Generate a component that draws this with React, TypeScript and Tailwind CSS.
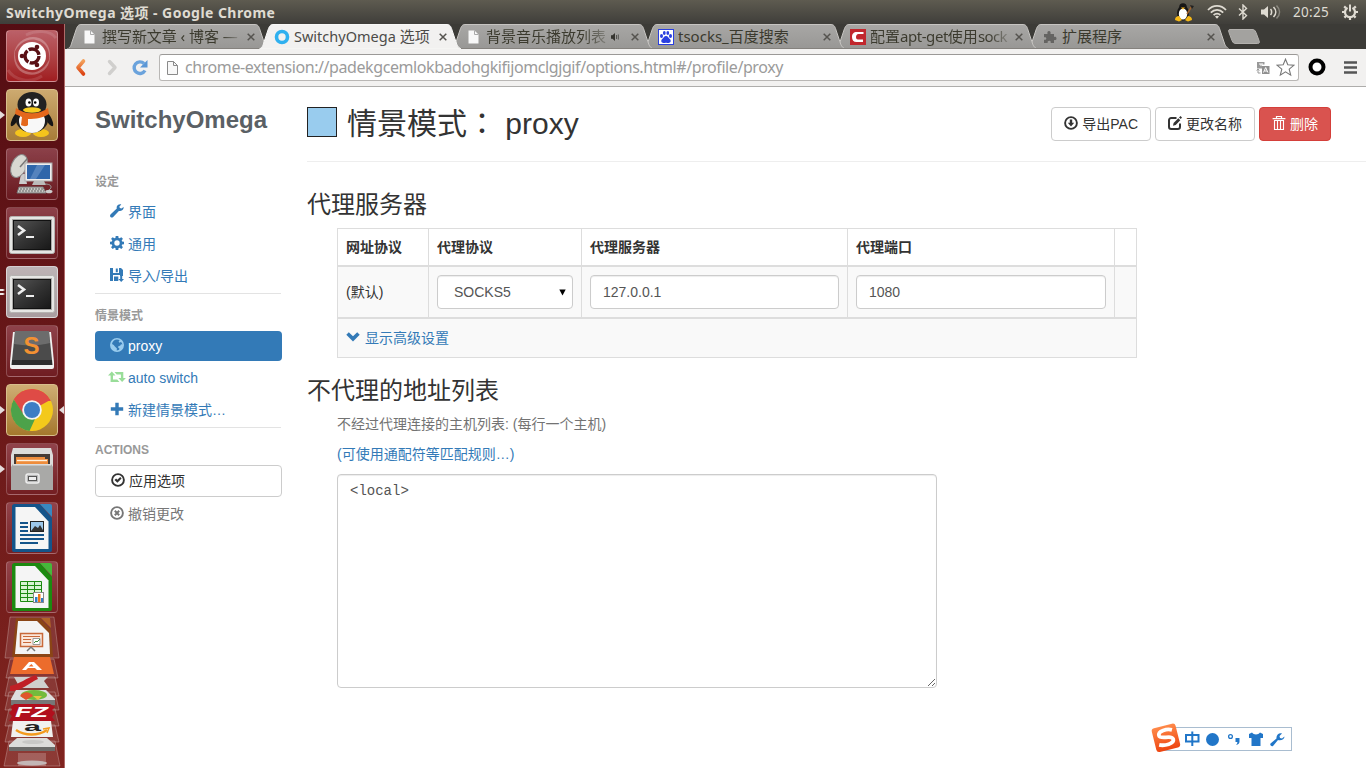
import React from "react";

type Kids = { children?: React.ReactNode };

/* ---------- small page icons, 14x14 grid ---------- */
const G = ({ children, className = "", w = 14 }: Kids & { className?: string; w?: number }) => (
  <svg width={w} height="14" viewBox={`0 0 ${w} 14`} className={`mb-[2px] shrink-0 ${className}`} fill="currentColor">
    {children}
  </svg>
);
const Wrench = ({ className = "" }) => (
  <G className={className}>
    <path d="M13.6 2.9 11.5 4.6 9.8 4.1 9.4 2.4 11.3.4C9.6-.2 7.6.5 6.9 2.3c-.3.8-.3 1.6-.1 2.3L.7 10.3c-.8.8-.9 1.9-.2 2.7.8.8 1.900.7 2.700-.1L8.900 6.900c1 .3 2.200.2 3.200-.6 1.200-.8 1.700-2.100 1.500-3.400z" />
  </G>
);
const Cog = () => (
  <G>
    <path
      fillRule="evenodd"
      d="M5.700 0h2.600l.3 1.900 1 .4L11.300 1.200l1.600 1.600-1.200 1.700.4 1 1.900.3v2.500l-1.900.3-.4 1 1.200 1.700-1.600 1.600-1.700-1.200-1 .4-.3 1.900H5.700l-.3-1.900-1-.4-1.700 1.200-1.600-1.600 1.200-1.700-.4-1L0 8.300V5.800l1.900-.3.4-1L1.100 2.800l1.600-1.600 1.700 1.100 1-.4zM7 4.300a2.700 2.700 0 1 0 0 5.400 2.700 2.700 0 0 0 0-5.400z"
    />
  </G>
);
const FloppySave = () => (
  <G>
    <path d="M0 0h3v5h6V0h2L13 2v6h-3V7H3v6H0zM5.800.6h2v3.600h-2z" />
    <path d="M4 8.400h4.300V13H4zM10.200 7.500h2v3.400H14l-2.800 3-2.800-3h1.800z" />
  </G>
);
const Globe = () => (
  <G className="text-[#99ccee]">
    <path
      fillRule="evenodd"
      d="M7 0a7 7 0 1 0 0 14A7 7 0 0 0 7 0zM7 1.500c1 0 1.900.2 2.700.6L8.600 3.600l.9 1.200 1.400-.7 1 .8.500 1.600-1.400-.3-.9 1.500-1.600.4-.4 1.500 1.300.9-.3 1.300A5.500 5.500 0 0 1 6.700 12.500L6.900 10.400 4.900 8.600 3.700 7 2 6C2.400 3.400 4.500 1.500 7 1.500z"
    />
  </G>
);
const Retweet = () => (
  <G w={18} className="text-[#99dd99]">
    <path d="M3.800 1.500 7.500 5.500H5V9.500h4.200l2.200 2.500H2.600V5.500H0zM6.500 2h8.800v6h2.600l-3.800 4-3.700-4h2.500V4.500H8.700z" />
  </G>
);
const Plus = () => (
  <G>
    <path d="M5.300.8h3.400v4.500h4.500v3.400H8.700v4.500H5.300V8.700H.8V5.300h4.500z" />
  </G>
);
const OkCircle = () => (
  <G>
    <circle cx="7" cy="7" r="5.900" fill="none" stroke="currentColor" strokeWidth="1.900" />
    <path d="m3.500 7 1.600-1.500 1.300 1.300 2.800-2.900 1.400 1.500-4.200 4.300z" />
  </G>
);
const RemoveCircle = () => (
  <G>
    <circle cx="7" cy="7" r="5.900" fill="none" stroke="currentColor" strokeWidth="1.900" />
    <path d="m4.800 4.800 4.400 4.400M9.200 4.800 4.800 9.200" stroke="currentColor" strokeWidth="2" />
  </G>
);
const Download = () => (
  <G>
    <circle cx="7" cy="7" r="5.900" fill="none" stroke="currentColor" strokeWidth="1.900" />
    <path d="M5.800 3.400h2.400v3.400h2L7 10.600 3.800 6.800h2z" />
  </G>
);
const Edit = () => (
  <G>
    <path
      d="M8.500 2H3.200A2.200 2.200 0 0 0 1 4.200v6.600A2.200 2.200 0 0 0 3.200 13h6.600A2.200 2.200 0 0 0 12 10.800V7.500"
      fill="none"
      stroke="currentColor"
      strokeWidth="2"
    />
    <path d="M5 9.700 5.600 6.900 10.300 2.200l2 2L7.700 8.900zM11 1.500 12.500.100 14 1.600 12.800 3z" />
  </G>
);
const Trash = () => (
  <G>
    <path d="M4.500 2.500v-2h5v2M.6 2.700h12.800" fill="none" stroke="currentColor" strokeWidth="1.200" />
    <path d="M2.500 4.500v9h9v-9zM5.500 5v8M8.500 5v8" fill="none" stroke="currentColor" strokeWidth="1.100" />
  </G>
);
const Chevron = () => (
  <G>
    <path d="M.3 4.800 2.800 2.300 7 6.200l4.200-3.900 2.500 2.500L7 11.500z" />
  </G>
);

/* ---------- launcher ---------- */
const Tile = ({ children, tone = "from-[#a05560]/70 to-[#7a2530]/40 border-white/20" }: Kids & { tone?: string }) => (
  <div className={`h-[52px] w-[52px] shrink-0 rounded-[4px] border bg-gradient-to-b ${tone}`}>
    <svg width="52" height="52" viewBox="0 0 52 52" className="-m-px block">
      {children}
    </svg>
  </div>
);
const Arrow = ({ children, left, right, dbl }: Kids & { left?: boolean; right?: boolean; dbl?: boolean }) => (
  <div className="flex w-[64px] items-center">
    <svg width="6" height="12" viewBox="0 0 6 12" className="shrink-0">
      {left && <path d="M0 2 5 6 0 10z" fill="#e4dcdc" />}
      {dbl && <path d="M0 3h3l2 1-2 1H0zM0 7h3l2 1-2 1H0z" fill="#f0eaea" />}
    </svg>
    {children}
    <svg width="6" height="12" viewBox="0 0 6 12" className="shrink-0">
      {right && <path d="M6 2 1 6l5 4z" fill="#e4dcdc" />}
    </svg>
  </div>
);
const Terminal = () => (
  <>
    <defs>
      <linearGradient id="term" x1="0" y1="0" x2="1" y2="1">
        <stop offset="0" stopColor="#555" />
        <stop offset=".5" stopColor="#333" />
        <stop offset="1" stopColor="#181818" />
      </linearGradient>
    </defs>
    <rect x="3.500" y="9.500" width="45" height="37" rx="2" fill="#e6e6e4" stroke="#b5b3b1" />
    <rect x="6" y="12" width="40" height="32" fill="#aaa9a7" />
    <rect x="7.500" y="13.500" width="37" height="29" fill="url(#term)" stroke="#111" />
    <path d="m12 19 6 4.500-6 4.500" fill="none" stroke="#eee" strokeWidth="2.600" />
    <path d="M20 30h8" stroke="#eee" strokeWidth="2" />
  </>
);
const Doc = ({ edge, corner, children }: Kids & { edge: string; corner: string }) => (
  <>
    <path d="M8.500 2H34l12 14v32a2 2 0 0 1-2 2H8a2 2 0 0 1-2-2V4.500A2.500 2.500 0 0 1 8.500 2z" fill={edge} />
    <path d="M34 2h10a2 2 0 0 1 2 2v11z" fill={corner} />
    <path d="M9.500 5H29l13.500 14.500V47h-33z" fill="#f5f5f5" />
    {children}
  </>
);

const Launcher = () => (
  <div className="flex h-[744px] w-[65px] shrink-0 flex-col overflow-hidden border-r border-[#b06a68] bg-gradient-to-b from-[#550d13] to-[#80241f]">
    <div className="flex flex-col gap-[7px] pt-[6px]">
      <Arrow>
        <Tile tone="from-[#bb6068] to-[#a01c20] border-white/30">
          <path d="M8 24C9 12 22 4 33 8c10 4 14 16 9 26 4-12-2-22-12-24-8-2-18 3-22 14zM44 28c-1 12-12 19-24 16C10 41 6 30 9 20c-1 12 4 20 14 22 8 2 16-3 21-14z" fill="#fff" opacity=".28" />
          <path d="M2 40C8 50 24 54 36 46M50 8C44 0 30 0 20 5" stroke="#fff" strokeOpacity=".12" strokeWidth="3" fill="none" />
          <circle cx="26" cy="26" r="14" fill="#fff" />
          <circle cx="26" cy="26" r="7" fill="none" stroke="#5a1015" strokeWidth="3.400" strokeDasharray="13.200 1.460" />
          <circle cx="16" cy="26" r="2.300" fill="#5a1015" />
          <circle cx="31" cy="17" r="2.300" fill="#5a1015" />
          <circle cx="31" cy="35" r="2.300" fill="#5a1015" />
        </Tile>
      </Arrow>
      <Arrow left>
        <Tile tone="from-[#cdaa70] to-[#a87d38] border-[#d8be8c]">
          <ellipse cx="17" cy="44" rx="8" ry="4" fill="#f5c51c" />
          <ellipse cx="35" cy="44" rx="8" ry="4" fill="#f5c51c" />
          <path d="M10 24c-4 5-6 11-5 13 2 1 5-3 6-5zM42 24c4 5 6 11 5 13-2 1-5-3-6-5z" fill="#161616" />
          <ellipse cx="26" cy="29" rx="16.500" ry="15" fill="#1c1c1c" />
          <ellipse cx="26" cy="32" rx="13" ry="12" fill="#f8f8f8" />
          <ellipse cx="26" cy="15.500" rx="14.500" ry="12.500" fill="#222" />
          <ellipse cx="22.500" cy="13.500" rx="3" ry="4" fill="#fff" />
          <ellipse cx="30" cy="13.500" rx="3" ry="4" fill="#fff" />
          <circle cx="23.400" cy="13.500" r="1.300" />
          <circle cx="29.200" cy="13.500" r="1.300" />
          <ellipse cx="26" cy="21" rx="9" ry="2.800" fill="#f7cd22" />
          <path d="M10 19c9 7 23 7 32 0l1 6c-6 4-13 5-21 5v6c-2 2-5 1-7 0l1-8-7-3z" fill="#e4681c" />
        </Tile>
      </Arrow>
      <Arrow>
        <Tile>
          <path d="m15 26-2 10h8l-2-10z" fill="#ccc" />
          <ellipse cx="13" cy="18" rx="7.500" ry="12" transform="rotate(24 13 18)" fill="#d8d8d2" stroke="#888" />
          <path d="m14 19 7-8" stroke="#777" strokeWidth="1.500" />
          <rect x="19" y="15" width="27" height="18" fill="#eee" stroke="#aaa" />
          <rect x="21" y="17" width="23" height="14" fill="#2f66aa" />
          <path d="M31 17h8l-9 14h-6z" fill="#6590c4" opacity=".7" />
          <path d="M28 33h10l2 4H26z" fill="#bbb" />
          <path d="M13 39h24l3 6H11z" fill="#c8c8c4" stroke="#777" />
          <path d="M14 41h23M13 43h25" stroke="#666" strokeDasharray="2 1" />
          <path d="M39 36c6 0 8 3 4 6" fill="none" stroke="#999" />
          <ellipse cx="43" cy="43.500" rx="3.500" ry="1.800" fill="#ccc" />
        </Tile>
      </Arrow>
      <Arrow>
        <Tile><Terminal /></Tile>
      </Arrow>
      <Arrow dbl>
        <Tile tone="from-[#bdb3b5] to-[#a99da0] border-white/50"><Terminal /></Tile>
      </Arrow>
      <Arrow>
        <Tile>
          <path d="M7 7h38l3 30v5a2 2 0 0 1-2 2H6a2 2 0 0 1-2-2v-5z" fill="#f0f0ef" />
          <path d="M6 35h40l.500 5h-41z" fill="#2c2c2c" />
          <path d="M9 6h34l3 29H6z" fill="#4b4b4b" />
          <path d="M9 6h34l1 12c-11 3-24 3-36 1z" fill="#888" opacity=".55" />
          <text x="17.500" y="29" fontSize="24" fontWeight="bold" fill="#f39132" fontFamily="Liberation Sans, sans-serif">S</text>
        </Tile>
      </Arrow>
      <Arrow left right>
        <Tile tone="from-[#cfae74] to-[#a5782c] border-[#d8be8c]">
          <circle cx="26" cy="26" r="21" fill="#f3c91b" />
          <path d="M26 26 7.800 15.500A21 21 0 0 1 44.200 16z" fill="#df4b46" />
          <path d="M26 17h18.900A21 21 0 0 0 7.800 15.500L17 31z" fill="#df4b46" />
          <path d="M7.800 15.500 18 31l11 4-5.500 12A21 21 0 0 1 7.800 15.500z" fill="#4ca24a" />
          <circle cx="26" cy="26" r="9.800" fill="#f4f4f4" />
          <circle cx="26" cy="26" r="8" fill="#3d7dc4" />
        </Tile>
      </Arrow>
      <Arrow left>
        <Tile>
          <path d="M7 5h38l2 7v20H5V12z" fill="#dcdcda" />
          <rect x="8" y="11" width="36" height="12" fill="#453b35" />
          <path d="M10 14h29v2h3v7H10z" fill="#ef8d3c" />
          <path d="M11 17.500h30" stroke="#fff2e0" strokeWidth="1.400" />
          <path d="M7 21h38l2 3v23H5V24z" fill="#a9a9a7" />
          <path d="M7 21h38v1.500H7z" fill="#ddd" />
          <rect x="20" y="31" width="13" height="9" rx="2" fill="#bbb" stroke="#eee" strokeWidth="1.500" />
          <rect x="22.500" y="33.500" width="8" height="4" fill="#eee" stroke="#555" />
        </Tile>
      </Arrow>
      <Arrow>
        <Tile>
          <Doc edge="#14548a" corner="#3888c0">
            <path d="M14 21h8M14 25h8M14 29h8M14 33h24M14 37h24M14 41h18" stroke="#14548a" strokeWidth="1.800" />
            <rect x="24.500" y="19.500" width="13" height="10" fill="#9cc7ea" stroke="#222" />
            <path d="m25 29 4-5 3 2 2-3 3.500 6z" fill="#333" />
          </Doc>
        </Tile>
      </Arrow>
      <Arrow>
        <Tile>
          <Doc edge="#1c8a10" corner="#45b83a">
            <rect x="14" y="20" width="22" height="21" fill="#d8f4d2" />
            <path d="M14.500 20.500h21v20h-21zM14 24.500h22M14 28.500h22M14 32.500h22M14 36.500h22M21.500 20v21M28.500 20v21" stroke="#1c8a10" fill="none" />
            <rect x="27.500" y="31.500" width="10" height="10" fill="#fff" stroke="#888" />
            <path d="M29 36h2.500v5H29zM35 37h2v4h-2z" fill="#2f7dc8" />
            <path d="M32 33h2.500v8H32z" fill="#f07818" />
          </Doc>
        </Tile>
      </Arrow>
    </div>
    <svg width="64" height="155" viewBox="0 0 64 155" className="block shrink-0">
      <g fill="#fff" fillOpacity=".1" stroke="#fff" strokeOpacity=".25">
        <path d="M10 4h44l5 41H5zM10 46h44l4 19H6zM9 64h46l4 19H5zM9 79h46l4 18H5zM9 96h46l4 17H5zM9 112h46l4 17H5zM9 128h46l5 25H4z" />
      </g>
      <path d="M16 5h24l11 12 2 27H12z" fill="#8a4516" />
      <path d="M18 8h19l12 12 1 21H15z" fill="#f4f4f4" />
      <path d="M41 5h9l1 10z" fill="#b06428" />
      <path d="M20.500 20.500h22v13h-22z" fill="#fbe8dc" stroke="#c8693a" strokeWidth="1.500" />
      <path d="M23 23.500h17M23 26.500h8M23 29.500h8" stroke="#c8693a" />
      <path d="M33 25.500h7v6h-7z" fill="#fff" stroke="#999" />
      <path d="m34 30 2-2 1 1 3-3" stroke="#3c8c3c" fill="none" />
      <path d="m27 38 4-4 4 4" stroke="#777" strokeWidth="1.500" fill="none" />
      <path d="M14 44h36l4 17H10z" fill="#ec6c2c" />
      <path d="M22 57 29 49h5l8 8h-5l-2-2h-7l-2 2zM28.500 53.500h5L31.500 51z" fillRule="evenodd" fill="#fff" />
      <path d="M14 64h34l-4 4 5 7H20z" fill="#cfcfcd" />
      <path d="M10 73c8-1 18-9 26-11l2 4c-9 4-18 13-28 12z" fill="#c01f26" />
      <path d="M16 77h30l9 9v5H11v-5z" fill="#dedede" />
      <path d="M11 87h44v5H11z" fill="#777" />
      <ellipse cx="34" cy="82" rx="13" ry="5" fill="#73bb3c" />
      <path d="M20 83c4-5 9-5 13 0l-7 4z" fill="#e0552c" />
      <path d="M33 83h9l-4 4z" fill="#e8c440" />
      <path d="m11 94 3-3h36l5 3-3 3 3 3-3 4 3 4H9l3-5-3-3 3-3z" fill="#b10f1d" />
      <text x="15" y="104" fontSize="14" fontWeight="bold" fontStyle="italic" fill="#fff" fontFamily="Liberation Sans, sans-serif" textLength="33" lengthAdjust="spacingAndGlyphs">FZ</text>
      <path d="M13 108h38l2 16H11z" fill="#f1f1ef" />
      <text x="24" y="118" fontSize="12" fontWeight="bold" fill="#222" fontFamily="Liberation Sans, sans-serif" textLength="17" lengthAdjust="spacingAndGlyphs">a</text>
      <path d="M16 117c9 6 22 6 31 0" fill="none" stroke="#f39a1d" strokeWidth="2.500" />
      <path d="m43 116 6-1-2 5" fill="none" stroke="#f39a1d" strokeWidth="1.500" />
      <path d="M17 125h30l8 7v3H9v-3z" fill="#dcdcda" />
      <path d="M9 134h46v4H9z" fill="#6b6b69" />
      <ellipse cx="33" cy="129" rx="11" ry="2" fill="#c8c8c6" />
      <path d="M18 140h28v13H18z" fill="#fff" opacity=".2" />
      <ellipse cx="32" cy="150" rx="15" ry="2.500" fill="#ccc" opacity=".8" />
    </svg>
  </div>
);

/* ---------- browser ---------- */
const File = ({ line = "none", cls = "" }) => (
  <svg width="16" height="16" viewBox="0 0 16 16" className={`shrink-0 ${cls}`}>
    <path d="M2.500 1.500h6l4 4v9h-10z" fill="#f8f8f8" stroke={line} />
    <path d="M8.500 1.500v4h4" fill="none" stroke={line === "none" ? "#aaa" : line} />
  </svg>
);
const Close = () => (
  <svg width="8" height="8" viewBox="0 0 8 8" className="shrink-0">
    <path d="m.700.700 6.600 6.600M7.300.700.700 7.300" stroke="#55534f" strokeWidth="1.500" />
  </svg>
);
const Tab = ({ icon, children, active, z, audio }: Kids & { icon: React.ReactNode; active?: boolean; z: string; audio?: boolean }) => (
  <div className={`relative -mr-[10px] h-[25px] w-[202px] shrink-0 ${z}`}>
    <svg width="202" height="25" viewBox="0 0 202 25" className="absolute inset-0">
      <defs>
        <linearGradient id="tabg" x1="0" y1="0" x2="0" y2="1">
          <stop offset="0" stopColor="#a8a7a5" />
          <stop offset="1" stopColor="#989795" />
        </linearGradient>
      </defs>
      <path
        d="M.5 25C4 23 4 21 5 18L9 6c1.300-4 2.500-5.500 5-5.500h174c2.500 0 4 1.500 5 5.500l4 12c1 3 1.500 5 5 7z"
        fill={active ? "#f2f1f0" : "url(#tabg)"}
        stroke={active ? "#f8f8f7" : "#c6c4c1"}
        strokeWidth="1"
      />
      {!active && <path d="M0 24.500h202" stroke="#85827e" />}
    </svg>
    <div className="relative flex h-full items-center pl-[15px]">
      {icon}
      <div
        className={`-mt-px ml-1 overflow-hidden whitespace-nowrap text-[15px] leading-[24px] ${audio ? "w-[122px]" : "w-[141px]"} ${active ? "text-[#4c4b48]" : "text-[#3b3a2e]"}`}
      >
        {children}
      </div>
      {audio && (
        <svg width="12" height="12" viewBox="0 0 12 12" className="-ml-px mr-[8px] shrink-0">
          <path d="M4 4.200h1.500L8 2v8L5.500 7.800H4z" fill="#35342f" />
          <path d="M9.500 4v4M11.300 3.500v5" stroke="#35342f" strokeOpacity=".7" />
        </svg>
      )}
      <div className="ml-[4px]"><Close /></div>
    </div>
  </div>
);

const TitleBar = () => (
  <div className="flex h-[24px] items-center bg-gradient-to-b from-[#5e5b50] to-[#3f3e3a] text-[#dfdbd2]">
    <div className="flex-1 whitespace-nowrap pl-[6px] text-[14px] font-bold tracking-[0.450px]">SwitchyOmega 选项 - Google Chrome</div>
    <svg width="20" height="20" viewBox="0 0 20 20" className="mr-[13px]">
      <ellipse cx="9" cy="11" rx="6" ry="7.500" fill="#161616" />
      <circle cx="9" cy="5" r="3.800" fill="#161616" />
      <ellipse cx="9" cy="12" rx="4.200" ry="5.500" fill="#fff" />
      <path d="M7 5.500h4l-2 2.200z" fill="#f5b31c" />
      <path d="M1 18c0-3 2-4 4-4l3 4-3 1.500zM18 18c0-3-2-4-4-4l-3 4 3 1.500z" fill="#f7b916" />
      <path d="m13 12 5-8" stroke="#a0622c" strokeWidth="1.500" />
      <path d="m16 3 4 1-2 3z" fill="#222" />
    </svg>
    <svg width="20" height="16" viewBox="0 0 20 16" className="mr-[11px]" fill="none" stroke="#dfdbd2" strokeWidth="1.700">
      <path d="M1 6C6 .5 14 .5 19 6M3.800 8.600c3.500-3.700 9-3.700 12.400 0M6.600 11.200c2-2 4.900-2 6.800 0" />
      <path d="M8 12.500c1-1 3-1 4 0l-2 2.300z" fill="#dfdbd2" stroke="none" />
    </svg>
    <svg width="10" height="16" viewBox="0 0 10 16" className="mr-[13px]" fill="none" stroke="#dfdbd2" strokeWidth="1.400">
      <path d="m1 4.500 7.500 7L5 15V1l3.500 3.500-7.500 7" />
    </svg>
    <svg width="20" height="16" viewBox="0 0 20 16" className="mr-[12px]" fill="none" stroke="#dfdbd2" strokeWidth="1.600">
      <path d="M0 5.500h3L7 2v12l-4-3.500H0z" fill="#dfdbd2" stroke="none" />
      <path d="M9.500 5c1.500 1.500 1.500 4.500 0 6M12.500 3c3 3 3 7 0 10" />
      <path d="M15.500 1.500c4 4 4 9 0 13" opacity=".4" />
    </svg>
    <span className="mr-[12px] w-[37px] text-[13.500px] tracking-[0.300px]">20:25</span>
    <svg width="16" height="16" viewBox="0 0 16 16" className="mr-[8px]" fill="none" stroke="#dfdbd2">
      <path d="M5.500 3.800a5 5 0 1 0 5 0" strokeWidth="2.200" />
      <path d="M8 .5v7" strokeWidth="2" />
      <path d="M3.800 4 2.200 2.400M12.200 4l1.600-1.600M3 8H0M13 8h3M4.400 11.600l-2 2M11.600 11.600l2 2M8 13v3" strokeWidth="2.200" />
    </svg>
  </div>
);

const TabStrip = () => (
  <div className="flex h-[25px] shrink-0 bg-[#3c3b37] pl-[2px]">
    <Tab z="z-[6]" icon={<File />}>
      <div className="w-[141px] bg-gradient-to-r from-[#3b3a2e] from-85% to-transparent bg-clip-text tracking-[-0.050px] text-transparent">撰写新文章 ‹ 博客 —</div>
    </Tab>
    <Tab z="z-[10]" active icon={<svg width="16" height="16" viewBox="0 0 16 16" className="shrink-0"><circle cx="8" cy="8" r="5.500" fill="none" stroke="#2fb0ef" strokeWidth="3.600" /></svg>}>
      <span className="text-[14.500px]">SwitchyOmega</span> 选项
    </Tab>
    <Tab z="z-[5]" audio icon={<File />}>
      <div className="w-[120px] bg-gradient-to-r from-[#3b3a2e] from-80% to-[#3b3a2e]/30 bg-clip-text text-transparent">背景音乐播放列表</div>
    </Tab>
    <Tab
      z="z-[4]"
      icon={
        <svg width="16" height="16" viewBox="0 0 16 16" className="shrink-0">
          <path d="M0 0h16v16H0z" fill="#2a3fe0" />
          <path d="M1 1h14v14H1z" fill="#fff" />
          <g fill="#2a3fe0">
            <ellipse cx="3.500" cy="7" rx="1.500" ry="1.900" />
            <ellipse cx="6.300" cy="4" rx="1.400" ry="2" />
            <ellipse cx="9.800" cy="4" rx="1.400" ry="2" />
            <ellipse cx="12.500" cy="7" rx="1.500" ry="1.900" />
            <path d="M8 7c2 0 2.500 2 4 3.300 1.500 1.500.5 3.700-1.300 3.700-1 0-1.700-.3-2.700-.3s-1.700.3-2.700.3C3.500 14 2.500 11.800 4 10.300 5.500 9 6 7 8 7z" />
          </g>
        </svg>
      }
    >
      tsocks_百度搜索
    </Tab>
    <Tab
      z="z-[3]"
      icon={
        <svg width="16" height="16" viewBox="0 0 16 16" className="shrink-0">
          <path d="M0 0h16v16H0z" fill="#c1272d" />
          <path d="M13.500 5V3H7C3.500 3 2 5 2 8s1.500 5 4.500 5H13v-2.500H8C6.500 10.500 6 9.500 6 8s.8-3 2.500-3z" fill="#fff" />
        </svg>
      }
    >
      <div className="w-[140px] bg-gradient-to-r from-[#3b3a2e] from-85% to-[#3b3a2e]/20 bg-clip-text text-transparent">
        配置<span className="tracking-[-0.450px]">apt-get</span>使用<span className="tracking-[-0.600px]">sock</span>
      </div>
    </Tab>
    <Tab
      z="z-[2]"
      icon={
        <svg width="16" height="16" viewBox="0 0 16 16" className="shrink-0">
          <path d="M2 5h3.500C5 3 5.800 2 7 2s2 1 1.500 3H12v3c1.500-.5 2.500.2 2.500 1.500S13.500 11.500 12 11v3H8.700c.3-1.500-.2-2.300-1.400-2.300s-2 .8-1.600 2.300H2v-3.300c1.500.3 2.300-.2 2.300-1.200S3.500 8 2 8.300z" fill="#656462" />
        </svg>
      }
    >
      扩展程序
    </Tab>
    <svg width="34" height="16" viewBox="0 0 34 16" className="ml-[8px] mt-[5px]">
      <path d="M3 .5h22c2 0 3 .5 4 3l3 8c.8 2 .5 3-1.500 3H9c-2 0-3-.5-4-3l-3-8c-.8-2-.5-3 1-3z" fill="#a3a29f" stroke="#b3b1ae" />
    </svg>
  </div>
);

const Toolbar = () => (
  <div className="flex h-[38px] shrink-0 items-center border-b border-[#aeadab] bg-[#f2f1f0]">
    <svg width="94" height="22" viewBox="0 0 94 22" className="shrink-0">
      <defs>
        <linearGradient id="bk" x1="0" y1="0" x2="0" y2="1">
          <stop offset="0" stopColor="#f3a05a" />
          <stop offset="1" stopColor="#dc4414" />
        </linearGradient>
      </defs>
      <path d="M18.500 4 13 10.500 18.500 17" fill="none" stroke="url(#bk)" strokeWidth="3.600" strokeLinecap="round" strokeLinejoin="round" />
      <path d="M44.500 4.500 50 10.500l-5.500 6" fill="none" stroke="#d0cfcd" strokeWidth="3.400" strokeLinecap="round" strokeLinejoin="round" />
      <path d="M79 6.500a5.800 5.800 0 1 0 1 7" fill="none" stroke="#6ba3dc" strokeWidth="3.400" />
      <path d="M82.500 3v7.500H75z" fill="#5b97d6" />
    </svg>
    <div className="flex h-[27px] w-[1140px] shrink-0 items-center rounded-[3px] border border-[#b9b7b5] border-t-[#9b9997] bg-white pl-[5px] pr-[3px]">
      <File line="#8a8a8a" />
      <div className="-mt-[2px] ml-[4px] flex-1 whitespace-nowrap text-[16px] leading-[22px] tracking-[-0.420px] text-[#9b9b9b]">
        chrome-extension://padekgcemlokbadohgkifijomclgjgif/options.html#/profile/proxy
      </div>
      <svg width="14" height="14" viewBox="0 0 14 14" className="mr-[6px]">
        <path d="M1 1h7.500v2.500H6v4H1z" fill="#999" />
        <path d="M3 3h4M5 3v2" stroke="#fff" />
        <path d="M6 5h7.500v8H6z" fill="#8f8f8f" />
        <path d="m7.500 11.500 2.200-5 2.200 5M8.500 10h2.500" stroke="#fff" fill="none" />
        <path d="M2 8v4h2.500M.7 9.500 2 8l1.300 1.500" stroke="#999" fill="none" />
      </svg>
      <svg width="19" height="19" viewBox="0 0 19 19">
        <path d="m9.500 1.200 2.300 5.600 6 .5-4.600 3.900 1.500 5.900-5.200-3.300-5.200 3.300 1.500-5.900L1.200 7.300l6-.5z" fill="#fff" stroke="#777" strokeWidth="1.100" />
      </svg>
    </div>
    <svg width="18" height="18" viewBox="0 0 18 18" className="-mt-px ml-[9px]">
      <circle cx="9" cy="9" r="6.500" fill="#fff" stroke="#000" strokeWidth="4" />
    </svg>
    <svg width="14" height="14" viewBox="0 0 14 14" className="-mt-px ml-[18px]">
      <path d="M0 2.500h13M0 7.500h13M0 12.500h13" stroke="#555" strokeWidth="2.400" />
    </svg>
  </div>
);

/* ---------- options page ---------- */
const Head = ({ children }: Kids) => (
  <div className="flex h-[37px] items-center pt-[6px] text-[12px] font-bold text-[#999]">{children}</div>
);
const Item = ({ icon, children, tone = "text-[#337ab7]" }: Kids & { icon: React.ReactNode; tone?: string }) => (
  <div className={`mb-[2px] flex h-[30px] items-center gap-1 whitespace-nowrap rounded-[4px] pl-[15px] ${tone}`}>
    {icon}
    {children}
  </div>
);
const Sidebar = () => (
  <div className="flex w-[187px] shrink-0 flex-col">
    <h1 className="mb-[41px] mt-[19px] text-[24px] font-bold leading-[28px] text-[#5a6065]">SwitchyOmega</h1>
    <div className="-mt-[15px]">
      <Head>设定</Head>
    </div>
    <Item icon={<Wrench />}>界面</Item>
    <Item icon={<Cog />}>通用</Item>
    <Item icon={<FloppySave />}>导入/导出</Item>
    <div className="h-px w-[186px] bg-[#e3e3e3]" />
    <Head>情景模式</Head>
    <Item icon={<Globe />} tone="bg-[#337ab7] text-white">proxy</Item>
    <Item icon={<div className="-mx-[2px] flex"><Retweet /></div>}>auto switch</Item>
    <Item icon={<Plus />}>新建情景模式…</Item>
    <div className="h-px w-[186px] bg-[#e3e3e3]" />
    <Head>ACTIONS</Head>
    <div className="mb-[2px] flex h-[32px] items-center gap-1 rounded-[4px] border border-[#ccc] pl-[15px] text-[#333]">
      <OkCircle />
      应用选项
    </div>
    <Item icon={<RemoveCircle />} tone="text-[#777]">撤销更改</Item>
  </div>
);

const Button = ({ icon, children, tone = "border-[#ccc] bg-white text-[#333]" }: Kids & { icon: React.ReactNode; tone?: string }) => (
  <button className={`flex h-[34px] items-center gap-1 whitespace-nowrap rounded-[4px] border px-[12px] ${tone}`}>
    {icon}
    {children}
  </button>
);

const field =
  "h-[34px] w-full rounded-[4px] border border-[#ccc] bg-white px-[12px] text-[14px] text-[#555] shadow-[inset_0_1px_1px_rgba(0,0,0,0.075)] outline-none";

const Profile = () => (
  <div className="ml-[25px] flex flex-1 flex-col">
    <div className="flex h-[75px] items-start border-b border-[#eee] pr-[35px] pt-[20px]">
      <div className="h-[30px] w-[30px] border border-[#222] bg-[#99ccee]" />
      <h2 className="-mt-[3px] ml-[10px] flex-1 whitespace-nowrap text-[30px] leading-[34px]">
        情景模式<span className="font-['Noto_Sans_CJK_TC',sans-serif]">：</span> proxy
      </h2>
      <div className="flex gap-1">
        <Button icon={<Download />}>导出PAC</Button>
        <Button icon={<Edit />}>更改名称</Button>
        <Button icon={<Trash />} tone="w-[72px] border-[#d43f3a] bg-[#d9534f] text-white">删除</Button>
      </div>
    </div>
    <h3 className="mt-[29px] text-[24px] leading-[27px]">代理服务器</h3>
    <div className="ml-[30px] mt-[10px] w-[800px] border border-[#ddd]">
      <div className="grid h-[38px] grid-cols-[91px_153px_266px_267px_21px] border-b-2 border-[#ddd] font-bold">
        {["网址协议", "代理协议", "代理服务器", "代理端口"].map((t) => (
          <div key={t} className="flex items-center border-r border-[#ddd] px-2">{t}</div>
        ))}
      </div>
      <div className="grid h-[52px] grid-cols-[91px_153px_266px_267px_21px] border-b-2 border-[#ddd] bg-[#f9f9f9]">
        <div className="flex items-center border-r border-[#ddd] px-2">(默认)</div>
        <div className="flex items-center border-r border-[#ddd] px-2">
          <div className={`${field} flex items-center justify-between pl-[16px] pr-[6px]!`}>
            SOCKS5
            <svg width="7" height="7" viewBox="0 0 7 7"><path d="M.3.5h6.400L3.500 6.500z" fill="#000" /></svg>
          </div>
        </div>
        <div className="flex items-center border-r border-[#ddd] px-2"><input className={field} defaultValue="127.0.0.1" /></div>
        <div className="flex items-center border-r border-[#ddd] px-2"><input className={field} defaultValue="1080" /></div>
      </div>
      <div className="flex h-[38px] items-center gap-[5px] bg-[#f9f9f9] pl-[8px] text-[#337ab7]">
        <Chevron />
        显示高级设置
      </div>
    </div>
    <h3 className="mt-[19px] text-[24px] leading-[27px]">不代理的地址列表</h3>
    <p className="ml-[30px] mt-[10px] leading-[20px] text-[#737373]">不经过代理连接的主机列表: (每行一个主机)</p>
    <p className="ml-[30px] mt-[10px] leading-[20px] text-[#337ab7]">(可使用通配符等匹配规则…)</p>
    <textarea
      className="ml-[30px] mt-[10px] h-[214px] w-[600px] resize rounded-[4px] border border-[#ccc] px-[12px] py-[6px] font-['Liberation_Mono',monospace] text-[14px] leading-[20px] text-[#555] shadow-[inset_0_1px_1px_rgba(0,0,0,0.075)] outline-none"
      defaultValue="<local>"
    />
  </div>
);

const InputMethodBar = () => (
  <div className="absolute left-[1150px] top-[723px] z-20 flex h-[30px] items-center">
    <svg width="32" height="32" viewBox="0 0 32 32" className="z-10 shrink-0">
      <defs>
        <linearGradient id="sg" x1="0" y1="0" x2="0" y2="1">
          <stop offset="0" stopColor="#ff8a4a" />
          <stop offset="1" stopColor="#ee4510" />
        </linearGradient>
      </defs>
      <g transform="rotate(-14 16 15)">
        <rect x="3.500" y="3.500" width="24.500" height="24.500" rx="3" fill="url(#sg)" />
        <path d="M23.500 9.500C19 7 9.500 7 9.500 12c0 4.500 13 2 13 7 0 4.500-10 4.500-15 2" fill="none" stroke="#fff" strokeWidth="3.800" />
      </g>
    </svg>
    <div className="-ml-[18px] mt-[2px] flex h-[24px] w-[128px] items-center border border-[#a9bdd0] bg-white pl-[20px]">
      <svg width="105" height="20" viewBox="0 0 105 20" fill="#2176c8">
        <path d="M1 6h12.500v6.500H1zM7.300 2.500V17" fill="none" stroke="#2176c8" strokeWidth="2" />
        <circle cx="27.500" cy="10.500" r="6.500" />
        <circle cx="45.500" cy="7.500" r="1.900" fill="none" stroke="#2176c8" strokeWidth="1.300" />
        <path d="M50.500 9h4v3.500c0 2-1 3-3.500 3.500 1-1 1.500-2 1.300-3h-1.800z" />
        <path d="M67 3.500c1.500 2.500 6.500 2.500 8 0l3 1.500v4h-2.500v8h-9V9H64V5z" />
        <path d="M99.500 7.500 97 9.500l-2-.5-.5-2L97 4.500c-3-1-6 1.500-5.500 5l-6 5c-1 1.500 1 3.500 2.500 2.500l5-6c3.500.8 6.500-1 6.500-3.500z" />
      </svg>
    </div>
  </div>
);

export default function App() {
  return (
    <div className="relative h-[768px] w-[1366px] overflow-hidden bg-white font-['Noto_Sans','Noto_Sans_CJK_SC',sans-serif]">
      <TitleBar />
      <div className="flex">
        <Launcher />
        <div className="flex h-[744px] w-[1301px] flex-col">
          <TabStrip />
          <Toolbar />
          <div className="flex flex-1 pl-[30px] font-['Liberation_Sans','Noto_Sans_CJK_SC',sans-serif] text-[14px] text-[#333]">
            <Sidebar />
            <Profile />
          </div>
        </div>
      </div>
      <InputMethodBar />
    </div>
  );
}
